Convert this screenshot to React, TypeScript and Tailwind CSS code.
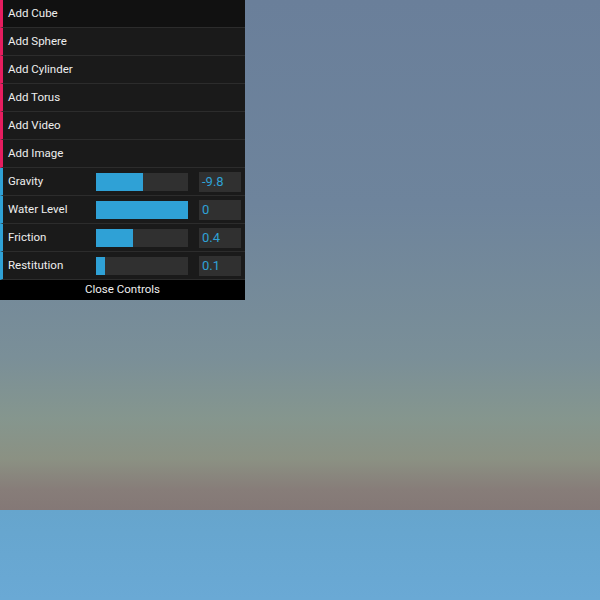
const buttons = ["Add Cube", "Add Sphere", "Add Cylinder", "Add Torus", "Add Video", "Add Image"];

const sliders = [
  { label: "Gravity", value: "-9.8", pct: 51 },
  { label: "Water Level", value: "0", pct: 100 },
  { label: "Friction", value: "0.4", pct: 40 },
  { label: "Restitution", value: "0.1", pct: 10 },
];

export default function App() {
  return (
    <div className="relative h-[600px] w-[600px] overflow-hidden font-['Roboto',sans-serif]">
      <div className="flex h-full flex-col">
        <div className="h-[510px] bg-[linear-gradient(to_bottom,#6a7f9a_0%,#6e849c_40%,#7a8f98_70%,#85968e_82%,#8b9183_90%,#877d79_96%,#847876_100%)]" />
        <div className="flex-1 bg-[linear-gradient(to_bottom,#66a5cd,#6aa9d5)]" />
      </div>

      <div className="absolute left-0 top-0 w-[245px] text-[11.5px] text-[#eeeeee]">
        {buttons.map((b, i) => (
          <div
            key={b}
            className={`flex h-[28px] items-center border-b border-l-[3px] border-b-[#2c2c2c] border-l-[#e61d5f] pt-[1px] pl-[5px] ${
              i === 0 ? "bg-[#111111]" : "bg-[#1a1a1a]"
            }`}
          >
            {b}
          </div>
        ))}
        {sliders.map((s) => (
          <div
            key={s.label}
            className="flex h-[28px] items-center border-b border-l-[3px] border-b-[#2c2c2c] border-l-[#2fa1d6] bg-[#1a1a1a] pl-[5px]"
          >
            <span className="w-[88px]">{s.label}</span>
            <div className="h-[18px] w-[92px] bg-[#303030]">
              <div className="h-full bg-[#2fa1d6]" style={{ width: `${s.pct}%` }} />
            </div>
            <div className="ml-[11px] flex h-[20px] w-[42px] items-center bg-[#303030] pl-[3px] pt-[1px] text-[13px] text-[#2fa1d6]">
              {s.value}
            </div>
          </div>
        ))}
        <div className="flex h-[20px] items-center justify-center bg-black text-[11.5px] text-[#eeeeee]">
          Close Controls
        </div>
      </div>
    </div>
  );
}
